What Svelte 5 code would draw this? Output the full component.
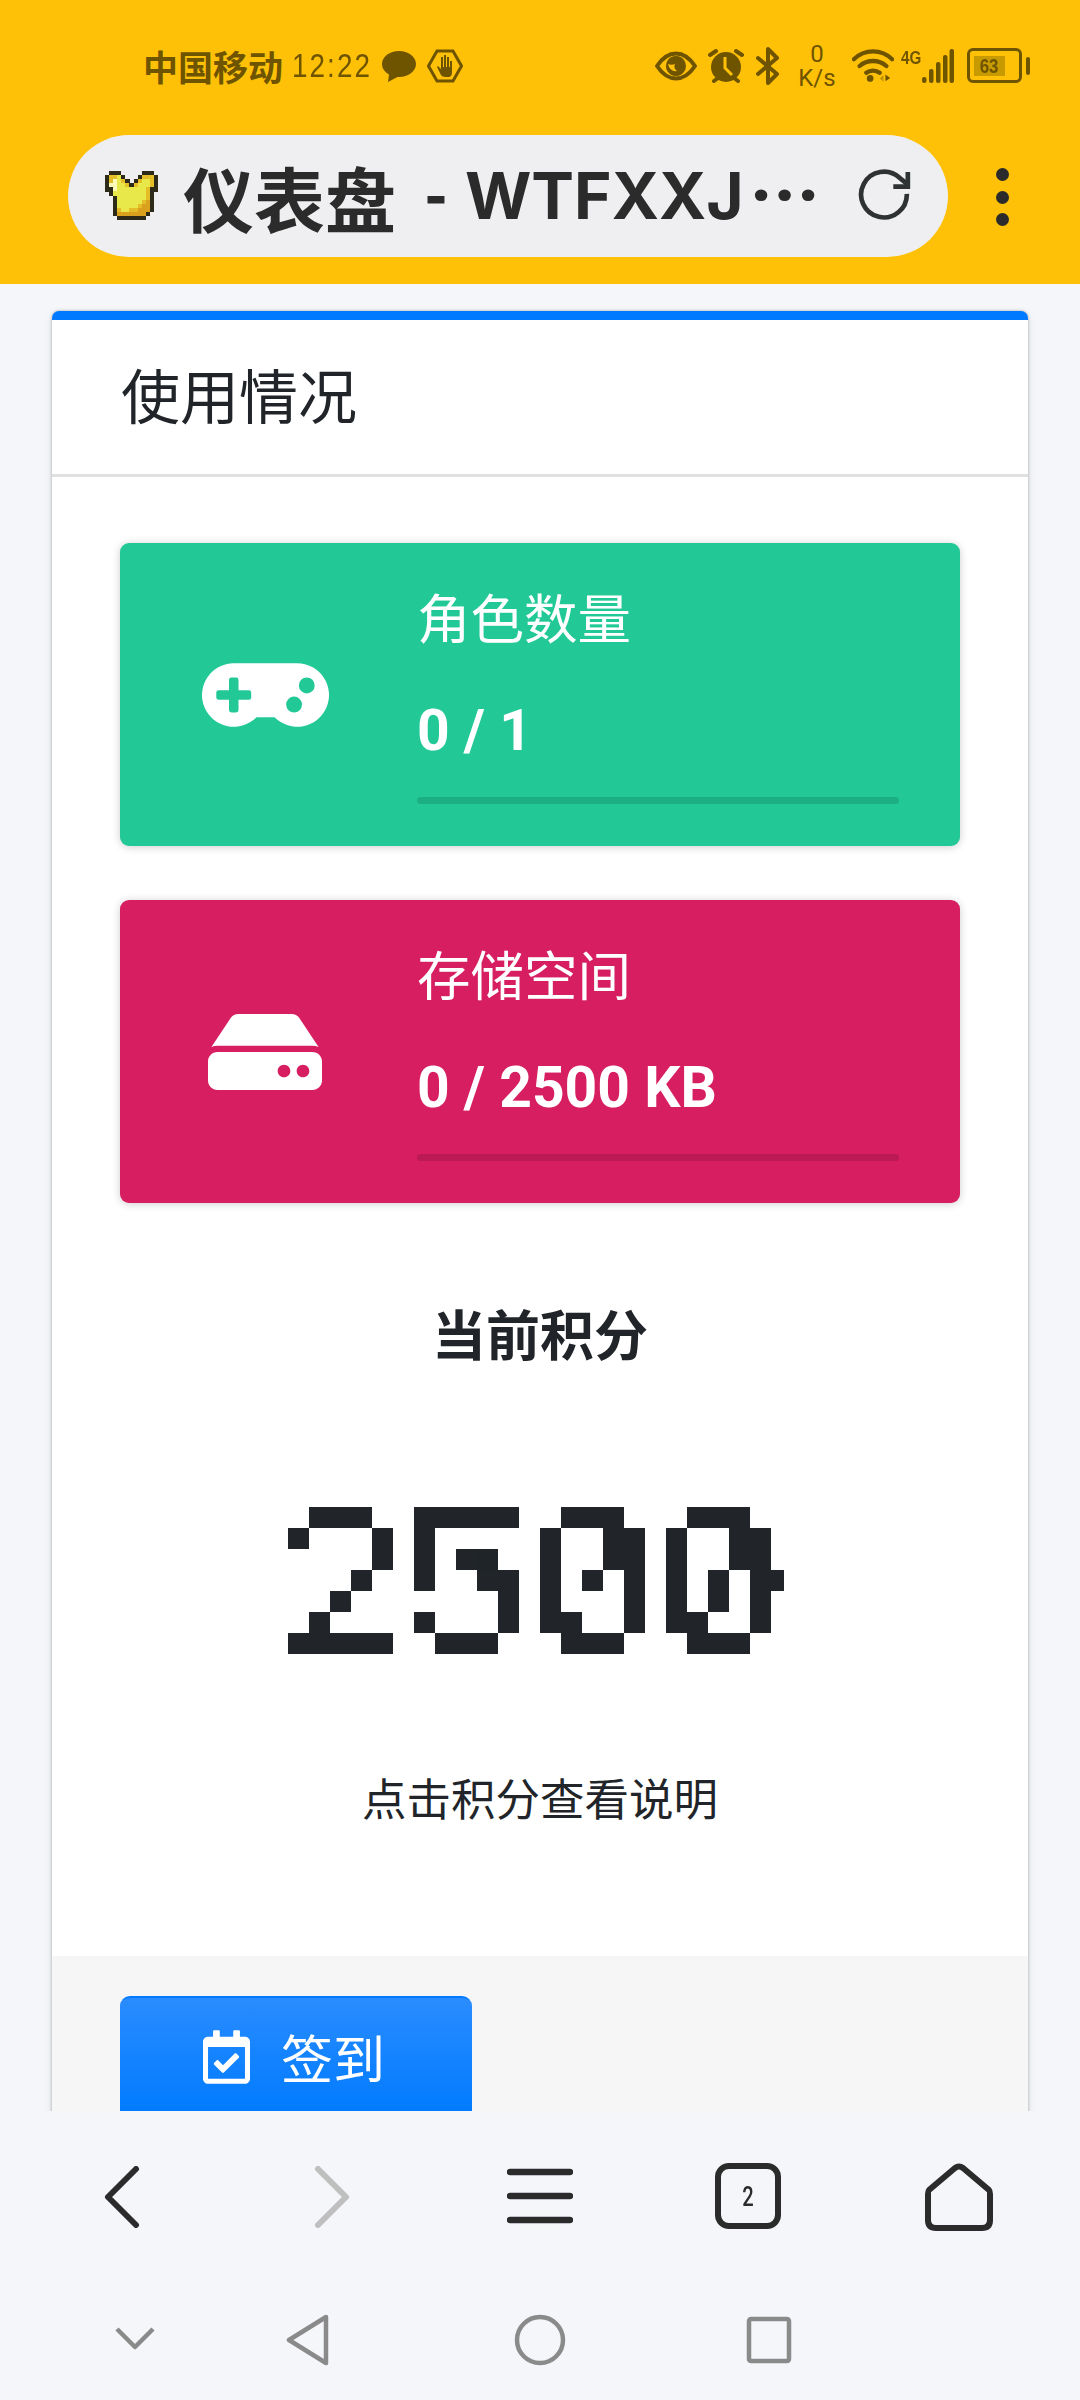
<script>
  const stats = [
    { title: '角色数量', value: '0 / 1', tone: 'green', icon: 'game' },
    { title: '存储空间', value: '0 / 2500 KB', tone: 'red', icon: 'disk' }
  ];
  const armorRows = [
    '.kkk.....kkk.',
    'kggyk...kgggk',
    'kgwygk.kgyygk',
    'kwwyygkgyyygk',
    'kkwyyyyyyygkk',
    '.kyyyyyyyygk.',
    '..kyyyyyyygk.',
    '..kyyyyyygok.',
    '..kyyyyygook.',
    '..kgyyggoook.',
    '..koooooook..',
    '...kkkkkkk...'
  ];
  const armorColors = { k: '#2e2a1a', g: '#e5bd27', y: '#e9e84b', w: '#fdfbb8', o: '#d9a11d' };
  const armorCells = armorRows.flatMap((row, y) =>
    [...row].map((c, x) => ({ x, y, c })).filter((p) => p.c !== '.')
  );
</script>

<div class="screen">
  <svg class="defs" width="0" height="0" aria-hidden="true">
    <filter id="blocks" x="0" y="0" width="1" height="1" color-interpolation-filters="sRGB">
      <feFlood x="10" y="10" width="1" height="1" flood-color="#000" />
      <feComposite width="21" height="21" />
      <feTile result="grid" />
      <feComposite in="SourceGraphic" in2="grid" operator="in" />
      <feMorphology operator="dilate" radius="10" />
      <feComponentTransfer>
        <feFuncA type="linear" slope="30" intercept="-8" />
      </feComponentTransfer>
    </filter>
  </svg>
  <header class="top">
    <div class="status">
      <div class="left">
        <span class="carrier">中国移动</span>
        <span class="clock">12:22</span>
        <svg class="msg" viewBox="0 0 34 34"><path d="M17 2C7.600 2 0 7.800 0 15c0 4.400 2.800 8.200 7 10.500L6 33l9.500-5.100c.5 0 1 .100 1.500.100 9.400 0 17-5.800 17-13S26.400 2 17 2z" /></svg>
        <svg class="hand" viewBox="0 0 36 36"><path class="hex" d="M10 3h16l8.500 15L26 33H10L1.500 18z" /><path d="M10 19l3 6c1 3 3 4 6 4h2c3 0 4-2 4-5V13h-2v6h-1V9h-2v10h-1V7h-2v12h-1V9h-2v12l-3-3z" /></svg>
      </div>
      <div class="right">
        <svg class="eye" viewBox="0 0 42 30"><path class="ln" d="M2 15C8 6 14 2.500 21 2.500S34 6 40 15c-6 9-12 12.500-19 12.500S8 24 2 15z" /><path fill-rule="evenodd" d="M21 5a10 10 0 1 1-.1 0zM13 13c1 5 5 8 9 7-3-2-3-5-2-7-2 1-5 1-7 0z" /></svg>
        <svg class="alarm" viewBox="0 0 36 36"><circle cx="18" cy="19" r="15" /><path class="ln" d="M2 7l6-4M34 7l-6-4M6 33l4-3M30 33l-4-3" /><path class="cut" d="M17 9v11l7 7" /></svg>
        <svg class="bt" viewBox="0 0 24 38"><path class="ln" d="M2 11l19 16-9 9V2l9 9L2 27" /></svg>
        <span class="speed"><b>0</b><b>K/s</b></span>
        <svg class="wifi" viewBox="0 0 44 36"><path class="ln w" d="M2 11c11-11 29-11 40 0M8 18c8-7 20-7 28 0M15 25c4-3 10-3 14 0" /><circle cx="19" cy="31" r="3.500" /><path d="M29 31l4-3.500v7z" opacity=".4" /><path d="M35 27v7l5-3.500z" /></svg>
        <span class="net">4G</span>
        <svg class="bars" viewBox="0 0 32 34"><rect x="0" y="28" width="4.500" height="6" rx="2" /><rect x="7" y="20" width="4.500" height="14" rx="2" /><rect x="14" y="13" width="4.500" height="21" rx="2" /><rect x="21" y="6" width="4.500" height="28" rx="2" /><rect x="27.500" y="0" width="4.500" height="34" rx="2" /></svg>
        <span class="batt"><span class="level"><span class="level-num">63</span></span></span>
        <span class="cap"></span>
      </div>
    </div>
    <div class="bar">
      <div class="pill">
        <svg class="armor" viewBox="0 0 13 12" shape-rendering="crispEdges">
          {#each armorCells as p}
            <rect x={p.x} y={p.y} width="1.020" height="1.020" fill={armorColors[p.c]} />
          {/each}
        </svg>
        <div class="title"><span class="cjk">仪表盘</span><span class="dash">-</span><span class="latin">WTFXXJ</span><span class="dots">···</span></div>
        <svg class="reload" viewBox="0 0 52 52"><path d="M47 24A22 22 0 1 1 40 8.500L48 15" /><path d="M48 3v14H34" /></svg>
      </div>
      <div class="more"><i></i><i></i><i></i></div>
    </div>
  </header>

  <main class="page">
    <section class="card">
      <div class="card-head">使用情况</div>
      <div class="card-body">
        {#each stats as s}
          <div class="box {s.tone}">
            <div class="box-icon">
              {#if s.icon === 'game'}
                <svg class="i-game" viewBox="0 0 640 320"><path transform="translate(0 -96)" d="M480.070 96H160a160 160 0 1 0 114.240 272h91.520A160 160 0 1 0 480.070 96zM248 268a12 12 0 0 1-12 12h-52v52a12 12 0 0 1-12 12h-24a12 12 0 0 1-12-12v-52H84a12 12 0 0 1-12-12v-24a12 12 0 0 1 12-12h52v-52a12 12 0 0 1 12-12h24a12 12 0 0 1 12 12v52h52a12 12 0 0 1 12 12zm216 76a40 40 0 1 1 40-40 40 40 0 0 1-40 40zm64-96a40 40 0 1 1 40-40 40 40 0 0 1-40 40z" /></svg>
              {:else}
                <svg class="i-disk" viewBox="0 0 576 384"><path transform="translate(0 -64)" d="M576 304v96c0 26.510-21.490 48-48 48H48c-26.510 0-48-21.490-48-48v-96c0-26.510 21.490-48 48-48h480c26.510 0 48 21.490 48 48zm-48-80a79.557 79.557 0 0 1 30.777 6.165L462.250 85.374A48.003 48.003 0 0 0 422.311 64H153.689a48 48 0 0 0-39.938 21.374L17.223 230.165A79.557 79.557 0 0 1 48 224h480zm-48 96c-17.673 0-32 14.327-32 32s14.327 32 32 32 32-14.327 32-32-14.327-32-32-32zm-96 0c-17.673 0-32 14.327-32 32s14.327 32 32 32 32-14.327 32-32-14.327-32-32-32z" /></svg>
              {/if}
            </div>
            <div class="box-text">
              <div class="box-title">{s.title}</div>
              <div class="box-value">{s.value}</div>
              <div class="track"></div>
            </div>
          </div>
        {/each}
        <div class="points">
          <div class="points-label">当前积分</div>
          <div class="points-num"><span>2500</span></div>
          <div class="points-hint">点击积分查看说明</div>
        </div>
      </div>
      <div class="card-foot">
        <div class="btn">
          <svg class="i-cal" viewBox="0 0 448 512"><path d="M400 64h-48V12c0-6.627-5.373-12-12-12h-40c-6.627 0-12 5.373-12 12v52H160V12c0-6.627-5.373-12-12-12h-40c-6.627 0-12 5.373-12 12v52H48C21.490 64 0 85.490 0 112v352c0 26.510 21.490 48 48 48h352c26.510 0 48-21.490 48-48V112c0-26.510-21.490-48-48-48zm-6 400H54a6 6 0 0 1-6-6V160h352v298a6 6 0 0 1-6 6zm-52.849-200.650L198.842 404.519c-4.705 4.667-12.303 4.637-16.971-.068l-75.091-75.699c-4.667-4.705-4.637-12.303.068-16.971l22.719-22.536c4.705-4.667 12.303-4.637 16.970.069l44.104 44.461 111.072-110.181c4.705-4.667 12.303-4.637 16.971.068l22.536 22.718c4.667 4.705 4.636 12.303-.069 16.970z" /></svg>
          <span>签到</span>
        </div>
      </div>
    </section>
  </main>

  <nav class="browser-nav">
    <svg viewBox="0 0 40 62" class="n n-back"><path d="M34 3L6 31l28 28" /></svg>
    <svg viewBox="0 0 40 62" class="n n-fwd"><path d="M6 3l28 28L6 59" /></svg>
    <svg viewBox="0 0 66 56" class="n n-menu"><path d="M3 4h60M3 28h60M3 52h60" /></svg>
    <div class="tabs"><span>2</span></div>
    <svg viewBox="0 0 68 70" class="n n-home"><path d="M4 28L30 6q4-3 8 0l26 22q1 1 1 4v26q0 8-8 8H11q-8 0-8-8V32q0-3 1-4z" /></svg>
  </nav>
  <div class="sys-nav">
    <svg viewBox="0 0 40 24" class="s s-down"><path d="M2 3l18 18L38 3" /></svg>
    <svg viewBox="0 0 46 52" class="s s-tri"><path d="M41 3L4 26l37 23z" /></svg>
    <svg viewBox="0 0 52 52" class="s s-cir"><circle cx="26" cy="26" r="23" /></svg>
    <svg viewBox="0 0 46 48" class="s s-sq"><rect x="3" y="3" width="40" height="42" rx="2" /></svg>
  </div>
</div>

<style>
  :global(body) {
    margin: 0;
    background: #f4f6fa;
  }
  .defs { position: absolute; }
  .screen {
    width: 1080px;
    height: 2400px;
    display: flex;
    flex-direction: column;
    overflow: hidden;
    font-family: Roboto, "Noto Sans CJK SC", sans-serif;
    color: #212529;
  }
  .top {
    height: 284px;
    flex: none;
    background: #ffc107;
    display: flex;
    flex-direction: column;
  }
  .status {
    height: 135px;
    padding: 0 9px 4px 143px;
    box-sizing: border-box;
    display: flex;
    align-items: center;
    justify-content: space-between;
    color: #6f5400;
    fill: #6f5400;
  }
  .left, .right {
    display: flex;
    align-items: center;
  }
  .carrier {
    font: 700 35px "Noto Sans CJK SC", sans-serif;
    line-height: 40px;
  }
  .clock {
    font: 400 34px "Liberation Sans", sans-serif;
    letter-spacing: 2.500px;
    margin-left: 9px;
    width: 78px;
    transform: scaleX(.82);
    transform-origin: left center;
  }
  .msg { width: 34px; height: 34px; margin-left: 12px; }
  .hand { width: 36px; height: 36px; margin-left: 11px; }
  .hex { fill: none; stroke: #6f5400; stroke-width: 3; }
  .right { padding-right: 41px; }
  .ln { fill: none; stroke: #6f5400; stroke-width: 4; stroke-linecap: round; stroke-linejoin: round; }
  .ln.w { stroke-width: 4.500; }
  .cut { fill: none; stroke: #ffc107; stroke-width: 3; }
  .eye { width: 42px; height: 30px; }
  .alarm { width: 36px; height: 36px; margin-left: 11px; }
  .bt { width: 24px; height: 38px; margin-left: 12px; }
  .speed {
    display: flex;
    flex-direction: column;
    align-items: center;
    margin-left: 18px;
    width: 38px;
    font: 400 24px/24px Roboto, sans-serif;
  }
  .speed b { font-weight: 400; }
  .wifi { width: 42px; height: 36px; margin-left: 16px; }
  .net {
    font: 700 19px/20px "Liberation Sans", sans-serif;
    margin: -16px 0 0 7px;
    width: 18px;
    transform: scaleX(.8);
    transform-origin: left center;
  }
  .bars { width: 32px; height: 34px; margin-left: 3px; }
  .batt {
    width: 49px;
    height: 29px;
    box-sizing: content-box;
    margin-left: 13px;
    border: 3px solid #6f5400;
    border-radius: 6px;
    display: flex;
    align-items: center;
  }
  .level {
    width: 31px;
    height: 20px;
    margin-left: 4px;
    background: #c79a00;
    text-align: center;
    font: 700 20px/20px "Liberation Sans", sans-serif;
  }
  .level-num {
    display: inline-block;
    transform: scaleX(.85);
  }
  .cap {
    width: 4px;
    height: 18px;
    margin-left: 4px;
    border-radius: 2px;
    background: #6f5400;
  }
  .bar {
    display: flex;
    align-items: flex-start;
  }
  .pill {
    width: 880px;
    height: 122px;
    margin-left: 68px;
    border-radius: 61px;
    background: #efeff1;
    display: flex;
    align-items: center;
    box-sizing: border-box;
    padding-left: 37px;
    position: relative;
  }
  .armor { width: 53px; height: 49px; flex: none; margin-bottom: 2px; }
  .title {
    display: flex;
    align-items: center;
    color: #2b2b2b;
    margin-left: 25px;
  }
  .cjk { font: 700 71px/90px "Noto Sans CJK SC", sans-serif; }
  .dash { font: 700 64px/90px Inter, sans-serif; margin: 0 14px 0 25px; transform: scaleX(.8); }
  .latin { font: 700 64px/90px Inter, sans-serif; }
  .dots { font: 700 78px/90px Roboto, sans-serif; margin-left: 6px; }
  .reload {
    width: 54px;
    height: 54px;
    position: absolute;
    right: 36px;
    top: 34px;
    fill: none;
    stroke: #2f3233;
    stroke-width: 4.500;
  }
  .more {
    width: 132px;
    display: flex;
    flex-direction: column;
    align-items: center;
    gap: 9.500px;
    padding-top: 33px;
    box-sizing: border-box;
    margin-left: -12px;
  }
  .more i {
    width: 13px;
    height: 13px;
    border-radius: 50%;
    background: #2b2b2b;
  }
  .page {
    flex: 1;
    min-height: 0;
    overflow: hidden;
    padding: 27px 52px 0;
  }
  .card {
    background: #fff;
    border-top: 9px solid #007bff;
    border-radius: 7px 7px 0 0;
    box-shadow: 0 0 3px rgba(0, 0, 0, .3), 0 3px 8px rgba(0, 0, 0, .1);
  }
  .card-head {
    font: 400 59px/80px "Noto Sans CJK SC", sans-serif;
    padding: 34px 69px 40px;
    border-bottom: 3px solid #dfe0e1;
  }
  .card-body {
    padding: 66px 68px 0;
  }
  .box {
    height: 303px;
    margin-bottom: 54px;
    border-radius: 9px;
    display: flex;
    color: #fff;
    fill: #fff;
    box-shadow: 0 1px 8px rgba(0, 0, 0, .2);
  }
  .green { background: #22c997; }
  .red { background: #d61e60; }
  .box-icon {
    width: 297px;
    box-sizing: border-box;
    display: flex;
    align-items: center;
    justify-content: center;
    padding-right: 7px;
  }
  .i-game { width: 127px; height: 64px; }
  .i-disk { width: 114px; height: 76px; }
  .box-text {
    flex: 1;
    padding: 33px 61px 0 0;
  }
  .box-title {
    font: 400 53.500px/80px "Noto Sans CJK SC", sans-serif;
  }
  .box-value {
    font: 700 57px/80px Roboto, sans-serif;
    margin-top: 35px;
  }
  .track {
    height: 7px;
    margin-top: 26px;
    border-radius: 4px;
    background: rgba(0, 0, 0, .125);
  }
  .points {
    display: flex;
    flex-direction: column;
    align-items: center;
  }
  .points-label {
    font: 700 54px/80px "Noto Sans CJK SC", sans-serif;
    margin-top: 36px;
  }
  .points-num {
    width: 504px;
    height: 147px;
    margin-top: 134px;
    margin-right: 42px;
    font: 450 202px/147px Inter, sans-serif;
    font-feature-settings: "zero" 1, "tnum" 1;
    letter-spacing: -17px;
    white-space: nowrap;
    filter: url(#blocks);
  }
  .points-num span {
    display: inline-block;
    transform: scaleX(1.12);
    transform-origin: left center;
  }
  .points-hint {
    font: 400 44.500px/60px "Noto Sans CJK SC", sans-serif;
    margin-top: 113px;
  }
  .card-foot {
    margin-top: 129px;
    padding: 40px 68px 60px;
    background: #f6f6f7;
  }
  .btn {
    width: 352px;
    height: 150px;
    box-sizing: border-box;
    border-top: 2px solid #007bff;
    border-radius: 10px 10px 0 0;
    background: linear-gradient(#2a8cff, #007bff 115px);
    color: #fff;
    fill: #fff;
    display: flex;
    align-items: flex-start;
    padding: 32px 0 0 83px;
  }
  .i-cal { width: 47px; height: 54px; flex: none; }
  .btn span { font: 400 52px/54px "Noto Sans CJK SC", sans-serif; margin-left: 31px; }
  .browser-nav {
    height: 168px;
    flex: none;
    background: #f4f6fa;
    position: relative;
  }
  .n {
    position: absolute;
    fill: none;
    stroke: #2b2b2b;
    stroke-width: 6;
    stroke-linecap: round;
    stroke-linejoin: round;
  }
  .n-back { left: 102px; top: 55px; width: 40px; height: 62px; }
  .n-fwd { left: 312px; top: 55px; width: 40px; height: 62px; stroke: #bfbfbf; }
  .n-menu { left: 507px; top: 57px; width: 66px; height: 56px; stroke-width: 6.500; }
  .tabs {
    position: absolute;
    left: 715px;
    top: 52px;
    width: 66px;
    height: 66px;
    box-sizing: border-box;
    border: 6px solid #2b2b2b;
    border-radius: 14px;
    display: flex;
    align-items: center;
    justify-content: center;
    font: 500 28px Roboto, sans-serif;
    color: #2b2b2b;
  }
  .tabs span { display: block; transform: scaleX(.72); }
  .n-home { left: 925px; top: 51px; width: 68px; height: 70px; }
  .sys-nav {
    height: 121px;
    flex: none;
    background: #f4f6fa;
    position: relative;
  }
  .s {
    position: absolute;
    fill: none;
    stroke: #8a8a8a;
    stroke-width: 4.500;
    stroke-linejoin: round;
  }
  .s-down { left: 115px; top: 47px; width: 40px; height: 24px; }
  .s-tri { left: 285px; top: 35px; width: 46px; height: 52px; }
  .s-cir { left: 514px; top: 35px; width: 52px; height: 52px; }
  .s-sq { left: 746px; top: 37px; width: 46px; height: 48px; }
</style>
